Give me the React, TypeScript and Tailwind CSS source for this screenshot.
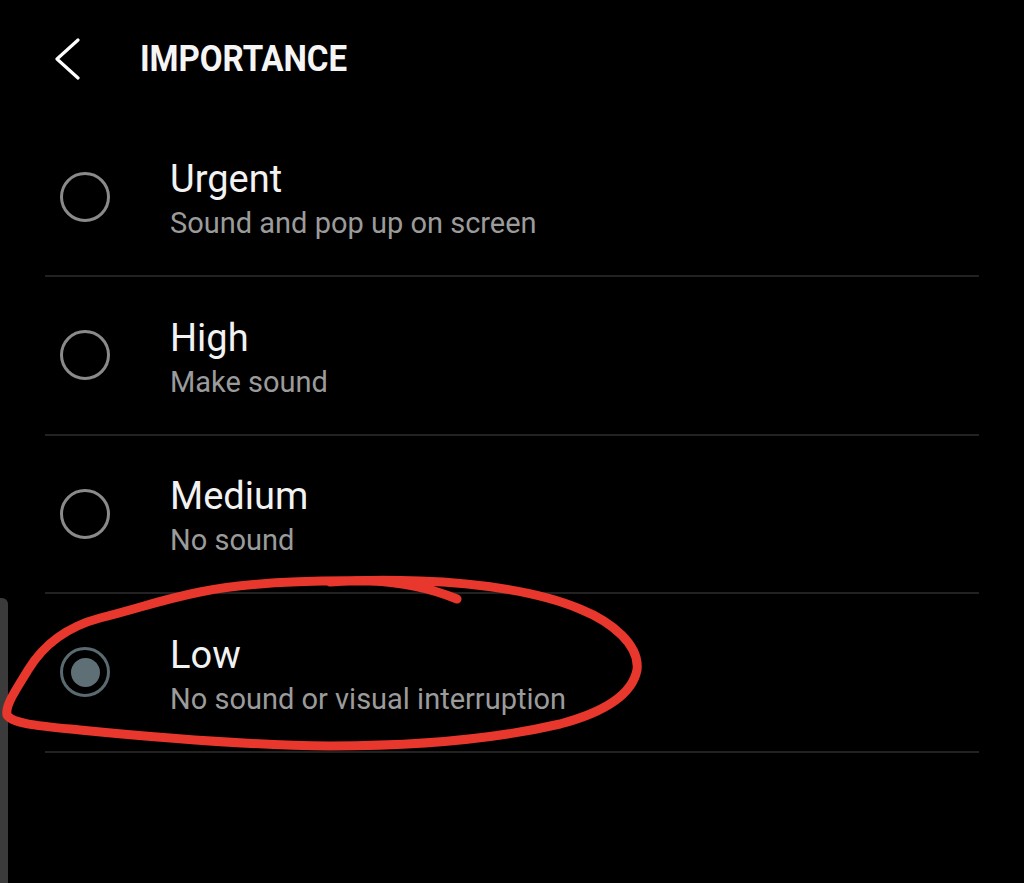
type Option = {
  id: string
  title: string
  subtitle: string
}

const options: Option[] = [
  { id: 'urgent', title: 'Urgent', subtitle: 'Sound and pop up on screen' },
  { id: 'high', title: 'High', subtitle: 'Make sound' },
  { id: 'medium', title: 'Medium', subtitle: 'No sound' },
  { id: 'low', title: 'Low', subtitle: 'No sound or visual interruption' },
]

function Radio({ checked }: { checked: boolean }) {
  if (checked) {
    return (
      <div className="flex h-[50px] w-[50px] shrink-0 items-center justify-center rounded-full border-[3px] border-[#5b6a70]">
        <div className="h-[29px] w-[29px] rounded-full bg-[#5f6f76]" />
      </div>
    )
  }
  return <div className="h-[50px] w-[50px] shrink-0 rounded-full border-[3px] border-[#8a8a8a]" />
}

// hand-drawn marker loop around the selected option
function Scribble() {
  return (
    <svg
      className="pointer-events-none absolute left-0 top-0"
      width={1024}
      height={883}
      viewBox="0 0 1024 883"
    >
      <path
        d="M457 599 C 430 588, 400 582, 370 581 C 300 580, 240 584, 200 592 C 160 600, 140 608, 100 618 C 70 626, 45 642, 28 670 C 16 690, 5 705, 7 715 C 12 724, 40 726, 80 730 C 150 737, 240 745, 330 746 C 420 746, 500 738, 560 724 C 605 712, 632 695, 637 670 C 640 645, 612 622, 580 609 C 540 592, 480 583, 420 581 C 390 580, 360 580, 330 582"
        fill="none"
        stroke="#e8372c"
        strokeWidth={9}
        strokeLinecap="round"
        strokeLinejoin="round"
      />
    </svg>
  )
}

export default function App() {
  const selected = 'low'

  return (
    <div className="relative h-[883px] w-[1024px] overflow-hidden bg-black font-['Roboto',sans-serif]">
      <header className="flex h-[118.5px] items-center">
        <svg width={26} height={42} viewBox="0 0 26 42" className="ml-[55px] text-white">
          <polyline
            points="23,2 2,21 23,40"
            fill="none"
            stroke="currentColor"
            strokeWidth={3.2}
            strokeLinecap="round"
            strokeLinejoin="round"
          />
        </svg>
        <h1 className="ml-[59px] origin-left scale-x-[0.92] text-[36px] font-bold tracking-[-0.1px] text-[#f5f5f5]">
          IMPORTANCE
        </h1>
      </header>

      <div>
        {options.map((opt) => (
          <div key={opt.id}>
            <div className="flex h-[156.5px] items-center pl-[60px]">
              <Radio checked={opt.id === selected} />
              <div className="ml-[60px] pt-[5px]">
                <div className="text-[38px] leading-[44px] text-[#f2f2f2]">{opt.title}</div>
                <div className="mt-[4px] text-[29px] leading-[36px] text-[#9b9b9b]">{opt.subtitle}</div>
              </div>
            </div>
            <div className="ml-[45px] h-[2px] w-[934px] bg-[#222222]" />
          </div>
        ))}
      </div>

      {/* edge panel handle */}
      <div className="absolute bottom-0 left-0 top-[598px] w-[8px] rounded-tr-[6px] bg-[#3b3b3b]" />

      <Scribble />
    </div>
  )
}
